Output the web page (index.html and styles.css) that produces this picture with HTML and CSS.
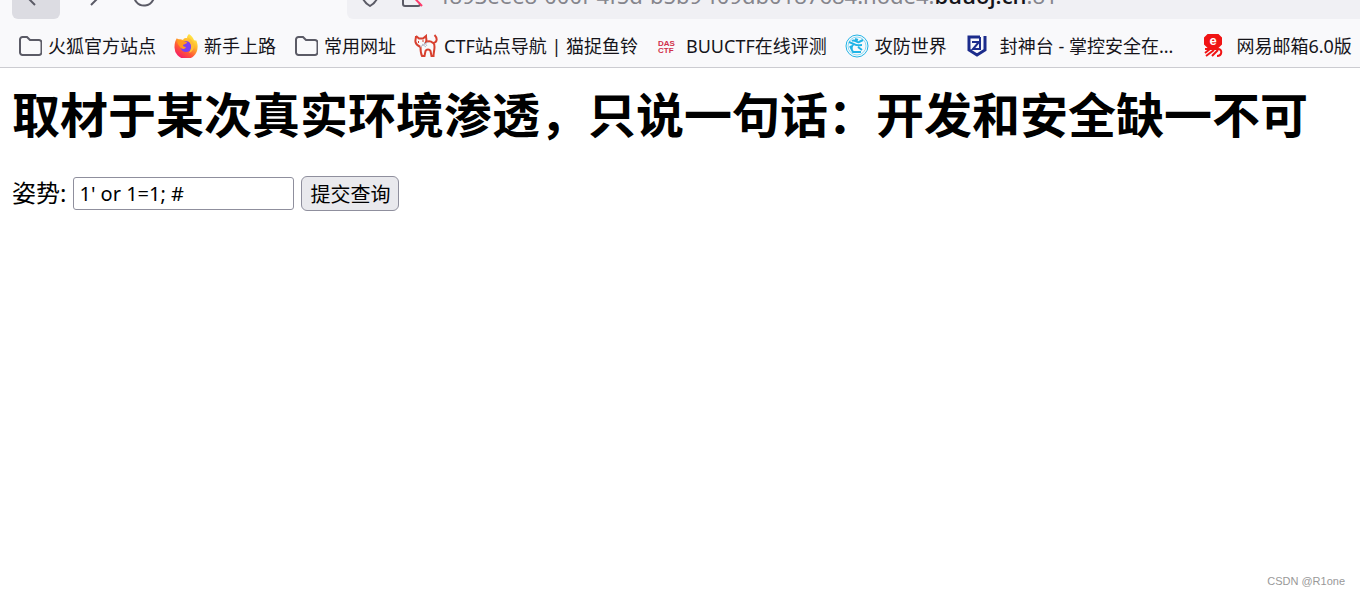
FILE: index.html
```
<!DOCTYPE html>
<html lang="zh-CN">

<head>
   <meta charset="utf-8" />
   <title>取材于某次真实环境渗透</title>
   <meta name="viewport" content="width=device-width, initial-scale=1">
   <link rel="stylesheet" href="styles.css">
</head>

<body>
   <header class="browser">
      <div class="toolbar">
         <button class="tool active" type="button" aria-label="后退">
            <svg viewBox="0 0 24 24"><path d="M11 22 1 12 11 2M1 12h22" /></svg>
         </button>
         <button class="tool" type="button" aria-label="前进">
            <svg viewBox="0 0 24 24"><path d="M13 22 23 12 13 2M23 12H1" /></svg>
         </button>
         <button class="tool" type="button" aria-label="刷新">
            <svg viewBox="0 0 24 24"><path d="M21 8a10 10 0 1 1-3-3.500M21 1v7h-7" /></svg>
         </button>
         <div class="urlbar">
            <svg viewBox="0 0 24 24"><path d="M12 1 4 5v6c0 6 3 9 8 12 5-3 8-6 8-12V5z" /></svg>
            <svg viewBox="0 0 24 24"><path d="M7 10V6a5 5 0 0 1 10 0v4M3 10h17v11a2 2 0 0 1-2 2H5a2 2 0 0 1-2-2z" /><path class="halo" d="M5 3 25 23" /><path class="slash" d="M3 3 22 23" /></svg>
            <span class="url">f893eee8-000f-4f5d-b5b9-f09db0187684.node4.<b>buuoj.cn</b>:81</span>
         </div>
      </div>
      <nav class="bookmarks">
         <a href="#">
            <svg class="folder" viewBox="0 0 24 24"><path d="M2 5.500a2.500 2.500 0 0 1 2.500-2.500H9l3 3h9a2.500 2.500 0 0 1 2.500 2.500v10a2.500 2.500 0 0 1-2.500 2.500H4.500A2.500 2.500 0 0 1 2 18.500z" /></svg>
            <span>火狐官方站点</span>
         </a>
         <a href="#">
            <svg viewBox="0 0 24 24">
               <defs>
                  <linearGradient id="fire" x1="0.850" y1="0.050" x2="0.250" y2="1">
                     <stop offset="0" stop-color="#fff44f" />
                     <stop offset="0.350" stop-color="#ffb52a" />
                     <stop offset="0.650" stop-color="#ff5a36" />
                     <stop offset="1" stop-color="#f5156c" />
                  </linearGradient>
               </defs>
               <path fill="url(#fire)" d="M15 0c3 2 4 4 5 6 1 0 1 1 1 1l1-1c1 2 2 5 1.500 8A11.500 11.500 0 0 1 .5 13C.5 9 1.500 6 3 4l1 2c2-1 3-1 5 0 1-2 2-2 4-2 0-2 1-3 2-4z" />
               <circle cx="12" cy="12.500" r="5.500" fill="#7a3ff0" />
               <path fill="#ff981f" d="M3 5c3 0 4 2 6 2l4 1c0 2-3 2-4 3 0 1 1 2 3 2-1 3-5 2-6 0-2-2-3-5-3-8z" />
               <path fill="#ffbd35" d="M14 4c3 1 6 4 6 8 0 3-2 6-5 7 2-3 3-7 1-10-1-2-2-3-2-5z" />
            </svg>
            <span>新手上路</span>
         </a>
         <a href="#">
            <svg class="folder" viewBox="0 0 24 24"><path d="M2 5.500a2.500 2.500 0 0 1 2.500-2.500H9l3 3h9a2.500 2.500 0 0 1 2.500 2.500v10a2.500 2.500 0 0 1-2.500 2.500H4.500A2.500 2.500 0 0 1 2 18.500z" /></svg>
            <span>常用网址</span>
         </a>
         <a href="#">
            <svg class="cat" viewBox="0 0 24 24">
               <path d="M2 2c0 3-1 4-.5 6 .5 3 3 4 5 5 0 3 0 6 1.500 9h2.500l1-5c1-2 4-2 5 0l1 5h2c0-3 1-6 1-9 0-2 0-3-1-4 4-1 4-5 1-8M2 2l3 2.500h4L12 2c0 3 1 4 0 6 2-1 5-1 7 1" />
               <path d="M4 8h1M8.500 7h1" />
               <path class="ribbon" d="M6 13l8-5M8 10l4 3M10 8l3 4" />
            </svg>
            <span>CTF站点导航 | 猫捉鱼铃</span>
         </a>
         <a href="#">
            <svg class="das" viewBox="0 0 24 24" aria-hidden="true">
               <text x="2" y="12">DAS</text>
               <text x="2" y="19">CTF</text>
            </svg>
            <span>BUUCTF在线评测</span>
         </a>
         <a href="#">
            <svg class="globe" viewBox="0 0 24 24">
               <circle class="rim" cx="12" cy="12" r="11" />
               <circle class="ring" cx="12" cy="12" r="9" />
               <path d="M7 7c3-2 4 2 7 1l4-2M4 8l5 2c2 2 5 1 8 1M9 10c-3 2-3 5-1 8h8M13 13l4 3M5 12l2 4M10 5l3 1" />
            </svg>
            <span>攻防世界</span>
         </a>
         <a href="#" class="wide">
            <svg class="badge" viewBox="0 0 24 24">
               <path d="M15 3H4v13l8 5 8-5V2" />
               <path class="zed" d="M7 8h7l-6 7h7V3" />
            </svg>
            <span>封神台 - 掌控安全在...</span>
         </a>
         <a href="#" class="wide">
            <svg class="mail" viewBox="0 0 24 24" aria-hidden="true">
               <path class="head" d="M7 1h10l3 3v6l-3 3H7l-3-3V4z" />
               <text x="12" y="11">e</text>
               <path d="M4 15h13c5 0 4 7-1 7M9 15l-5 4M13 16l-8 6M17 16l-6 6" />
            </svg>
            <span>网易邮箱6.0版</span>
         </a>
      </nav>
   </header>

   <main class="content">
      <h1>取材于某次真实环境渗透，只说一句话：开发和安全缺一不可</h1>
      <form class="query">
         <label for="inject">姿势:</label>
         <input id="inject" type="text" name="inject" value="1' or 1=1; #">
         <button type="submit">提交查询</button>
      </form>
   </main>

   <footer class="watermark">CSDN @R1one</footer>
</body>

</html>
```
FILE: styles.css
```
* {
   box-sizing: border-box;
}

body {
   margin: 0;
   min-height: 100vh;
   display: flex;
   flex-direction: column;
   background: #fff;
   color: #000;
   font-family: "Noto Sans", "Noto Sans CJK SC", sans-serif;
}

svg {
   width: 24px;
   height: 24px;
   flex: none;
   fill: none;
   stroke-width: 2;
}

.browser {
   background: #f9f9fb;
   border-bottom: 1px solid #ccccd1;
}

/* the toolbar is scrolled up, only its lower edge shows */
.toolbar {
   display: flex;
   align-items: flex-end;
   gap: 6px;
   height: 19px;
   padding-left: 12px;
   overflow: hidden;
}

.tool {
   display: flex;
   align-items: center;
   justify-content: center;
   width: 48px;
   height: 48px;
   padding: 0;
   border: 0;
   border-radius: 6px;
   background: none;
}

.tool svg,
.urlbar svg {
   stroke: #5b5b66;
}

.tool.active {
   background: #dcdce2;
}

.urlbar {
   flex: 1;
   display: flex;
   align-items: center;
   gap: 18px;
   height: 48px;
   margin-left: 173px;
   padding-left: 11px;
   border-radius: 6px 0 0 6px;
   background: #f0f0f4;
   color: #85858c;
   font-size: 22px;
   white-space: nowrap;
}

.urlbar .halo {
   stroke: #f0f0f4;
   stroke-width: 3;
}

.urlbar .slash {
   stroke: #ff3b6b;
}

.url b {
   color: #15141a;
   font-family: "Open Sans", sans-serif;
   font-weight: 600;
}

.bookmarks {
   display: flex;
   align-items: center;
   gap: 18px;
   height: 48px;
   padding: 6px 0 0 18px;
   overflow: hidden;
}

.bookmarks a {
   display: flex;
   align-items: center;
   gap: 6px;
   flex: none;
   color: #15141a;
   font-size: 18px;
   line-height: 24px;
   text-decoration: none;
   white-space: nowrap;
}

.bookmarks .wide {
   gap: 11px;
   padding-right: 10px;
}

.folder {
   stroke: #5b5b66;
}

.cat {
   stroke: #d8402f;
}

.cat .ribbon {
   stroke: #b4bccb;
   stroke-width: 1;
}

.das text {
   fill: #d0304a;
   font: bold 8px "Liberation Sans", sans-serif;
}

.globe {
   stroke: #22b4e6;
}

.globe .rim {
   stroke-width: 1;
}

.globe .ring {
   stroke: #8ad9f3;
   stroke-width: 1;
}

.badge {
   stroke: #1c2c8c;
   stroke-width: 3;
}

.badge .zed {
   stroke-width: 2;
}

.mail {
   stroke: #f01414;
}

.mail .head {
   fill: #f01414;
}

.mail text {
   fill: #fff;
   stroke: none;
   font: bold 13px "Liberation Sans", sans-serif;
   text-anchor: middle;
}

.content {
   flex: 1;
   padding: 11px 12px;
}

h1 {
   margin: 0 0 24px;
   font-size: 48px;
   line-height: 72px;
}

.query {
   display: flex;
   align-items: center;
   gap: 7px;
   font-size: 24px;
   line-height: 36px;
}

.query input {
   width: 221px;
   height: 33px;
   padding: 0 5px;
   border: 1px solid #8f8f9d;
   border-radius: 3px;
   background: #fff;
   color: #000;
   font: 20px "Noto Sans", sans-serif;
}

.query button {
   height: 35px;
   padding: 0 8px;
   border: 1px solid #8f8f9d;
   border-radius: 6px;
   background: #e9e9ed;
   color: #000;
   font: 20px "Noto Sans CJK SC", sans-serif;
}

.watermark {
   padding: 0 15px 6px;
   color: #999;
   font: 11px/16px "Liberation Sans", sans-serif;
   text-align: right;
}
```
